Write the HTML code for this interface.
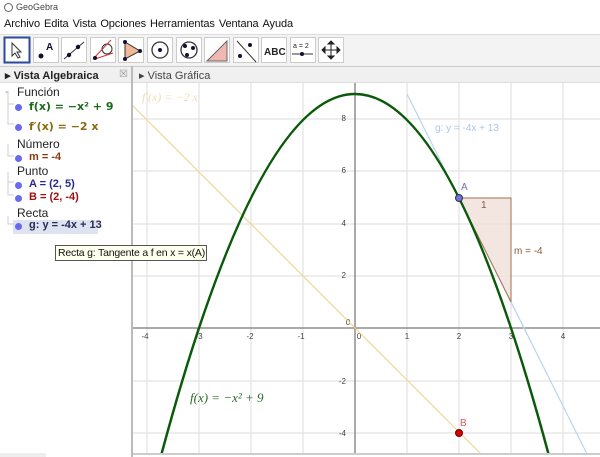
<!DOCTYPE html>
<html><head><meta charset="utf-8"><style>
*{margin:0;padding:0;box-sizing:border-box}
html,body{width:600px;height:457px;overflow:hidden}
body{background:#fff;font-family:"Liberation Sans",sans-serif;position:relative}
.abs{position:absolute}
.menu span{margin-right:4px}
.tr{position:absolute;font-size:12px;color:#222}
.dot{position:absolute;width:7px;height:7px;border-radius:50%;background:#6a6aee}
.lbl{position:absolute;font-size:11px;font-weight:bold}
</style></head><body>
<div class="abs" style="left:0;top:0;width:600px;height:15px;background:#fff;font-size:9px;color:#444;padding:2px 0 0 16px">GeoGebra</div>
<div class="abs" style="left:4px;top:3px;width:9px;height:9px;border:1px solid #666;border-radius:50%"></div>
<div class="abs menu" style="left:4px;top:18px;font-size:11px;color:#111;white-space:nowrap;letter-spacing:-0.1px"><span>Archivo</span><span>Edita</span><span>Vista</span><span>Opciones</span><span>Herramientas</span><span>Ventana</span><span>Ayuda</span></div>
<div class="abs" style="left:0;top:34px;width:600px;height:32px;background:#f3f3f3;border-top:1px solid #ddd"></div>
<svg class="abs" style="left:0;top:34px" width="600" height="32">
<g fill="#fff" stroke="#ccc">
<rect x="33.5" y="3.5" width="25" height="25"/><rect x="61.5" y="3.5" width="25" height="25"/><rect x="90.5" y="3.5" width="25" height="25"/><rect x="118.5" y="3.5" width="25" height="25"/><rect x="147.5" y="3.5" width="25" height="25"/><rect x="176.5" y="3.5" width="25" height="25"/><rect x="204.5" y="3.5" width="25" height="25"/><rect x="233.5" y="3.5" width="25" height="25"/><rect x="261.5" y="3.5" width="25" height="25"/><rect x="290.5" y="3.5" width="25" height="25"/><rect x="318.5" y="3.5" width="25" height="25"/></g>
<rect x="4.5" y="3.5" width="25" height="25" fill="#fff" stroke="#2a4a9a" stroke-width="2"/>
<path d="M12 9 L12 22 L15 19 L18 24 L20 23 L17 18 L21 18 Z" fill="#fff" stroke="#333"/>
<g transform="translate(33,0)"><circle cx="8" cy="22" r="2.5" fill="#113"/><text x="13" y="16" font-size="10" font-weight="bold" fill="#113">A</text></g>
<g transform="translate(61,0)"><line x1="3" y1="25" x2="23" y2="8" stroke="#333"/><circle cx="8" cy="21" r="2.2" fill="#113"/><circle cx="17" cy="13" r="2.2" fill="#113"/></g>
<g transform="translate(90,0)"><circle cx="17" cy="15" r="5" fill="none" stroke="#333"/><line x1="3" y1="25" x2="21" y2="6" stroke="#c33"/><line x1="5" y1="25" x2="23" y2="19" stroke="#c33"/><circle cx="5" cy="24" r="2" fill="#113"/></g>
<g transform="translate(118,0)"><path d="M7 8 L22 17 L7 25 Z" fill="#f0b896" stroke="#333"/><circle cx="7" cy="8" r="2" fill="#113"/><circle cx="22" cy="17" r="2" fill="#113"/><circle cx="7" cy="25" r="2" fill="#113"/></g>
<g transform="translate(147,0)"><circle cx="13" cy="16" r="8" fill="none" stroke="#333" stroke-width="1.3"/><circle cx="13" cy="16" r="2" fill="#113"/></g>
<g transform="translate(176,0)"><circle cx="13" cy="16" r="8" fill="none" stroke="#333" stroke-width="1.3"/><circle cx="9" cy="12" r="2" fill="#113"/><circle cx="17" cy="14" r="2" fill="#113"/><circle cx="11" cy="21" r="2" fill="#113"/></g>
<g transform="translate(204,0)"><path d="M3 27 L23 7 L23 27 Z" fill="#f0b8b0" stroke="#666"/></g>
<g transform="translate(233,0)"><line x1="4" y1="7" x2="23" y2="28" stroke="#333"/><circle cx="17" cy="11" r="2" fill="#113"/><circle cx="7" cy="22" r="2" fill="#113"/></g>
<text x="264" y="21" font-size="10" font-weight="bold" fill="#222">ABC</text>
<g transform="translate(290,0)"><text x="3" y="14" font-size="7" fill="#222">a = 2</text><line x1="2" y1="20" x2="23" y2="20" stroke="#333"/><circle cx="12" cy="20" r="2" fill="#113"/></g>
<path d="M331 8 L331 24 M323 16 L339 16 M331 7 l-3 3 h6 z M331 25 l-3 -3 h6 z M322 16 l3 -3 v6 z M340 16 l-3 -3 v6z" stroke="#222" fill="#222"/>
</svg>
<div class="abs" style="left:0;top:66px;width:600px;height:17px;background:#f0f0f0;border-top:1px solid #ccc;border-bottom:1px solid #ddd"></div>
<div class="abs" style="left:5px;top:69px;font-size:11px;font-weight:bold;color:#222">▸ Vista Algebraica</div>
<div class="abs" style="left:119px;top:69px;font-size:10px;color:#999">☒</div>
<div class="abs" style="left:139px;top:69px;font-size:11px;color:#444">▸ Vista Gráfica</div>
<div class="abs" style="left:131px;top:66px;width:2px;height:391px;background:#bbb"></div>
<div class="tr" style="left:5px;top:84px;color:#999">-</div><div class="tr" style="left:17px;top:85px">Función</div>
<div class="dot" style="left:15px;top:104px"></div><div class="lbl" style="left:29px;top:100px;color:#1a6a1a;font-family:'DejaVu Sans',sans-serif">f(x) = −x² + 9</div>
<div class="dot" style="left:15px;top:124px"></div><div class="lbl" style="left:29px;top:120px;color:#8a6a10;font-family:'DejaVu Sans',sans-serif">f′(x) = −2 x</div>
<div class="tr" style="left:17px;top:137px">Número</div>
<div class="dot" style="left:15px;top:155px"></div><div class="lbl" style="left:29px;top:151px;color:#8a3a10">m = -4</div>
<div class="tr" style="left:17px;top:164px">Punto</div>
<div class="dot" style="left:15px;top:182px"></div><div class="lbl" style="left:29px;top:178px;color:#2a2a8a">A = (2, 5)</div>
<div class="dot" style="left:15px;top:195px"></div><div class="lbl" style="left:29px;top:191px;color:#a01010">B = (2, -4)</div>
<div class="tr" style="left:17px;top:206px">Recta</div>
<div class="abs" style="left:13px;top:220px;width:85px;height:14px;background:#dde4f0"></div>
<div class="dot" style="left:15px;top:223px"></div><div class="lbl" style="left:29px;top:219px;color:#2a2a5a">g: y = -4x + 13</div>
<svg class="abs" style="left:0;top:84px" width="30" height="160"><g stroke="#ccc" fill="none"><path d="M8 8 V20 H14 M8 20 V40 H14 M8 60 V72 H14 M8 88 V98 H14 M8 98 V111 H14 M8 132 V140 H14"/></g></svg>
<svg class="abs" style="left:133px;top:83px" width="467" height="374">
<g transform="translate(-133,-83)">
<defs><clipPath id="c"><rect x="133" y="83" width="467" height="370"/></clipPath></defs>
<g clip-path="url(#c)">
<g stroke="#ddd" stroke-width="1">
<line x1="147" y1="83" x2="147" y2="453"/><line x1="199" y1="83" x2="199" y2="453"/><line x1="251" y1="83" x2="251" y2="453"/><line x1="303" y1="83" x2="303" y2="453"/><line x1="407" y1="83" x2="407" y2="453"/><line x1="459" y1="83" x2="459" y2="453"/><line x1="511" y1="83" x2="511" y2="453"/><line x1="563" y1="83" x2="563" y2="453"/>
<line x1="133" y1="119" x2="600" y2="119"/><line x1="133" y1="171" x2="600" y2="171"/><line x1="133" y1="224" x2="600" y2="224"/><line x1="133" y1="276" x2="600" y2="276"/><line x1="133" y1="381" x2="600" y2="381"/><line x1="133" y1="433" x2="600" y2="433"/>
</g>
<line x1="355" y1="83" x2="355" y2="453" stroke="#555"/><line x1="133" y1="328" x2="600" y2="328" stroke="#555"/>
<g font-size="8" fill="#444" text-anchor="middle">
<text x="145" y="339">-4</text><text x="199" y="339">-3</text><text x="250" y="339">-2</text><text x="301" y="339">-1</text><text x="359" y="339">0</text><text x="407" y="339">1</text><text x="459" y="339">2</text><text x="511" y="339">3</text><text x="563" y="339">4</text>
<text x="348" y="325">0</text>
<text x="346" y="121" text-anchor="end">8</text><text x="346" y="173" text-anchor="end">6</text><text x="346" y="226" text-anchor="end">4</text><text x="346" y="278" text-anchor="end">2</text><text x="346" y="384" text-anchor="end">-2</text><text x="346" y="436" text-anchor="end">-4</text>
</g>
<line x1="121" y1="94" x2="615" y2="588" stroke="#f0d8a0" stroke-width="1.2"/>
<line x1="407" y1="94" x2="589" y2="458" stroke="#b8d4ec" stroke-width="1.2"/>
<path d="M459 198 L511 198 L511 302 Z" fill="#f0e0d8" fill-opacity=".8" stroke="#a07050"/>
<path d="M147 510 Q355 -322 563 510" fill="none" stroke="#0a5a0a" stroke-width="2.5"/>
<circle cx="459" cy="198" r="3.5" fill="#7070e0" stroke="#333"/>
<circle cx="459" cy="433" r="3.5" fill="#d00" stroke="#600"/>
<g font-size="10">
<text x="461" y="190" fill="#7070c0">A</text><text x="481" y="208" fill="#8a5a3a">1</text><text x="514" y="254" fill="#8a5a3a">m = -4</text><text x="460" y="426" fill="#d06060">B</text>
<text x="435" y="131" fill="#a8c8e8">g: y = -4x + 13</text>
</g>
<text x="142" y="101" font-family="Liberation Serif" font-style="italic" font-size="12" fill="#f0dcb0">f′(x) = −2 x</text>
<text x="190" y="402" font-family="Liberation Serif" font-style="italic" font-size="13" fill="#2a6a2a">f(x) = −x² + 9</text>
</g>
<line x1="133" y1="454" x2="600" y2="454" stroke="#ccc" stroke-width="2"/>
</g></svg>
<div class="abs" style="left:0;top:453px;width:46px;height:4px;background:#eee"></div>
<div class="abs" style="left:55px;top:245px;width:152px;height:16px;background:#ffffee;border:1px solid #555;font-size:10.5px;color:#111;padding:1px 2px;white-space:nowrap;overflow:hidden;letter-spacing:-0.2px">Recta <u>g</u>: Tangente a f en x = x(A)</div>
</body></html>
